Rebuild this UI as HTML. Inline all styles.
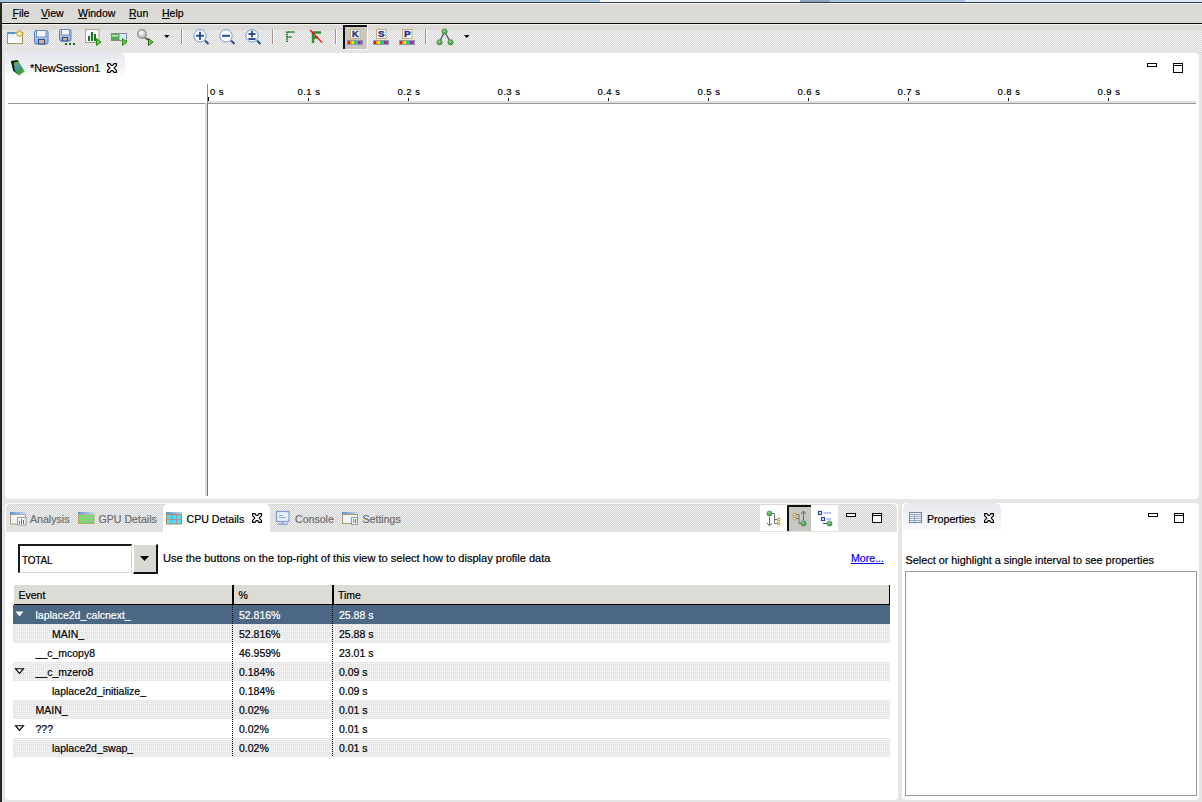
<!DOCTYPE html>
<html><head><meta charset="utf-8">
<style>
*{box-sizing:border-box;margin:0;padding:0}
html,body{width:1202px;height:802px;overflow:hidden}
body{position:relative;background:#e5e5e3;font-family:"Liberation Sans",sans-serif;font-size:11px;color:#000}
.a{position:absolute}
.t{position:absolute;white-space:pre;line-height:1;-webkit-text-stroke:0.2px currentColor}
svg{position:absolute;overflow:visible}
</style></head><body>
<!-- top strip -->
<div class="a" style="left:0;top:0;width:1202px;height:2px;background:#a9c6e3"></div>
<div class="a" style="left:600px;top:0;width:200px;height:2px;background:#f4f6f8"></div>
<div class="a" style="left:800px;top:0;width:30px;height:2px;background:#8fa5c0"></div>
<div class="a" style="left:965px;top:0;width:237px;height:2px;background:#dfe9f4"></div>
<div class="a" style="left:0;top:2px;width:1202px;height:1px;background:#2c3d52"></div>
<div class="a" style="left:0;top:3px;width:2px;height:799px;background:#262626"></div>
<!-- menu bar -->
<div class="a" style="left:2px;top:3px;width:1200px;height:20px;background:#dcdad5;border-top:1px solid #f6f6f4"></div>
<div class="a" style="left:2px;top:23px;width:1200px;height:1px;background:#0a0a0a"></div>
<div class="t" style="left:12.5px;top:8px;font-size:10.5px">File</div>
<div class="a" style="left:12px;top:18px;width:5px;height:1px;background:#000"></div>
<div class="t" style="left:41px;top:8px;font-size:10.5px">View</div>
<div class="a" style="left:41px;top:18px;width:7px;height:1px;background:#000"></div>
<div class="t" style="left:78px;top:8px;font-size:10.5px">Window</div>
<div class="a" style="left:78px;top:18px;width:9px;height:1px;background:#000"></div>
<div class="t" style="left:129px;top:8px;font-size:10.5px">Run</div>
<div class="a" style="left:129px;top:18px;width:7px;height:1px;background:#000"></div>
<div class="t" style="left:162px;top:8px;font-size:10.5px">Help</div>
<div class="a" style="left:162px;top:18px;width:8px;height:1px;background:#000"></div>
<!-- toolbar -->
<div class="a" style="left:2px;top:24px;width:1200px;height:29px;background:linear-gradient(#f4f4f2 0 1px,#dcdad6 1px 6px,transparent 6px),repeating-conic-gradient(#dbd9d5 0 25%,#eef0f2 0 50%) 0 0/2px 2px"></div>

<svg style="left:0;top:0" width="480" height="52" viewBox="0 0 480 52">
<defs>
<linearGradient id="gwin" x1="0" y1="0" x2="0" y2="1"><stop offset="0" stop-color="#e4eef8"/><stop offset="1" stop-color="#ffffff"/></linearGradient>
<linearGradient id="gflop" x1="0" y1="0" x2="0" y2="1"><stop offset="0" stop-color="#dfe8f4"/><stop offset="1" stop-color="#8aa6d2"/></linearGradient>
<radialGradient id="gmag" cx="0.4" cy="0.35" r="0.6"><stop offset="0" stop-color="#ffffff"/><stop offset="1" stop-color="#b8b8b8"/></radialGradient>
<radialGradient id="gnode" cx="0.4" cy="0.35" r="0.7"><stop offset="0" stop-color="#9ad08a"/><stop offset="1" stop-color="#3f8f3f"/></radialGradient>
</defs>
<!-- new session -->
<rect x="7.5" y="32.5" width="15" height="11" fill="url(#gwin)" stroke="#a58f5f"/>
<rect x="7" y="32" width="8" height="2" fill="#5f8fcc"/>
<path d="M19.5 30L23 33.5L19.5 37L16 33.5Z" fill="#f2dc7a" stroke="#b88f12" stroke-width="1"/>
<path d="M19.5 31.5V35.5M17.5 33.5H21.5" stroke="#fff8d0" stroke-width="1"/>
<!-- save -->
<rect x="34.5" y="30.5" width="13.5" height="13.5" rx="1.5" fill="url(#gflop)" stroke="#5b7fbe"/>
<rect x="36.5" y="30.5" width="9.5" height="6.5" fill="#f2f6fb" stroke="#6a8cc6" stroke-width="1"/>
<rect x="38.5" y="39.5" width="6" height="4.5" fill="#c8b488" stroke="#2c4a90"/>
<!-- save all -->
<rect x="59.5" y="29.5" width="11.5" height="11.5" rx="1.5" fill="url(#gflop)" stroke="#5b7fbe"/>
<rect x="61.5" y="29.5" width="8" height="5.5" fill="#f2f6fb" stroke="#6a8cc6"/>
<rect x="62.5" y="37.5" width="5" height="3.5" fill="#c8b488" stroke="#2c4a90"/>
<rect x="65" y="43" width="2" height="2" fill="#127012"/><rect x="69" y="43" width="2" height="2" fill="#127012"/><rect x="73" y="43" width="2" height="2" fill="#127012"/>
<!-- chart -->
<rect x="85.5" y="29.5" width="13.5" height="13" fill="#f6f8fb" stroke="#bba878"/>
<path d="M85.5 42.5H99" stroke="#9a9a8a"/>
<rect x="88" y="36" width="2" height="5" fill="#1b761b"/><rect x="91" y="32" width="2" height="9" fill="#1b761b"/><rect x="94" y="34" width="2" height="7" fill="#1b761b"/>
<path d="M96.5 38.5L101 42L96.5 45.5Z" fill="#5cd23a" stroke="#2f8a16"/>
<!-- icon5 -->
<rect x="111.5" y="33.5" width="15" height="7" fill="#d8ecf8" stroke="#8a8aa0"/>
<rect x="111.5" y="33.5" width="7.5" height="7" fill="#4fae4f" stroke="#8a8a70"/>
<rect x="112" y="35" width="6" height="1.5" fill="#c6ecc6"/>
<path d="M122.5 38.5L127 42L122.5 45.5Z" fill="#5cd23a" stroke="#2f8a16"/>
<!-- magnifier -->
<circle cx="142" cy="34" r="4.3" fill="url(#gmag)" stroke="#8c8c8c" stroke-width="1.2"/>
<path d="M145 37.5L148 40" stroke="#444" stroke-width="1.6"/>
<path d="M148.5 38.5L153 42L148.5 45.5Z" fill="#5cd23a" stroke="#2a6a12"/>
<path d="M164 35H169.5L166.75 38Z" fill="#000"/>
<!-- separator -->
<rect x="181" y="29" width="1" height="15" fill="#9a9893"/><rect x="182" y="29" width="1" height="15" fill="#fff"/>
<!-- zoom in/out/fit -->
<g stroke="#6f9bd2" stroke-width="1" fill="#fbfdff">
<circle cx="200" cy="35.8" r="6.2"/><circle cx="226" cy="35.8" r="6.2"/><circle cx="252" cy="35.8" r="6.2"/></g>
<g stroke="#2d4f94" stroke-width="2" fill="none" stroke-linecap="butt">
<path d="M205 40.5L208.5 44"/><path d="M231 40.5L234.5 44"/><path d="M257 40.5L260.5 44"/>
<path d="M196 35.8H204M200 31.8V39.8"/>
<path d="M222 35.8H230"/>
<path d="M248.5 34H255.5M252 30.8V37.2M248.5 39H255.5"/>
</g>
<rect x="272" y="29" width="1" height="15" fill="#9a9893"/><rect x="273" y="29" width="1" height="15" fill="#fff"/>
<!-- F icons -->
<path d="M287 42V32H295M287 37H292" stroke="#2f8a2f" stroke-width="2" stroke-dasharray="1.5 0.7" fill="none"/>
<path d="M313 43V32.5H321M313 37.5H318" stroke="#2a922a" stroke-width="2.4" fill="none"/>
<path d="M310 30L322 42.5" stroke="#f01010" stroke-width="1.3"/>
<rect x="335" y="29" width="1" height="15" fill="#9a9893"/><rect x="336" y="29" width="1" height="15" fill="#fff"/>
<!-- K S P -->
<rect x="343" y="25" width="24" height="24" fill="#c9c7c2"/>
<rect x="343" y="25" width="24" height="2" fill="#111"/><rect x="343" y="25" width="2" height="24" fill="#111"/>
<rect x="367" y="25" width="1" height="25" fill="#fafafa"/><rect x="343" y="49" width="25" height="1" fill="#fafafa"/>
<g fill="#fcfcfc" stroke="#c2ab78"><rect x="350.5" y="29.5" width="9.5" height="9"/><rect x="376.5" y="29.5" width="9.5" height="9"/><rect x="402.5" y="29.5" width="9.5" height="9"/></g>
<g fill="#1c3d8a" stroke="#1c3d8a" stroke-width="0.5" font-family="Liberation Sans" font-weight="bold" font-size="9">
<text x="352" y="37" textLength="6.6" lengthAdjust="spacingAndGlyphs">K</text><text x="378" y="37" textLength="6.6" lengthAdjust="spacingAndGlyphs">S</text><text x="404" y="37" textLength="6.6" lengthAdjust="spacingAndGlyphs">P</text></g>
<rect x="347.5" y="40.5" width="15" height="4" fill="#8a9ab8" stroke="#8f9aae"/>
<rect x="348" y="41" width="2" height="3" fill="#e81818"/>
<rect x="350" y="41" width="2" height="3" fill="#f89a10"/>
<rect x="352" y="41" width="2" height="3" fill="#f6f01a"/>
<rect x="354" y="41" width="2" height="3" fill="#3cc83c"/>
<rect x="356" y="41" width="2" height="3" fill="#18c0e0"/>
<rect x="358" y="41" width="2" height="3" fill="#d0187a"/>
<rect x="360" y="41" width="2" height="3" fill="#8a4ab8"/>
<rect x="373.5" y="40.5" width="15" height="4" fill="#8a9ab8" stroke="#8f9aae"/>
<rect x="374" y="41" width="2" height="3" fill="#e81818"/>
<rect x="376" y="41" width="2" height="3" fill="#f89a10"/>
<rect x="378" y="41" width="2" height="3" fill="#f6f01a"/>
<rect x="380" y="41" width="2" height="3" fill="#3cc83c"/>
<rect x="382" y="41" width="2" height="3" fill="#18c0e0"/>
<rect x="384" y="41" width="2" height="3" fill="#d0187a"/>
<rect x="386" y="41" width="2" height="3" fill="#8a4ab8"/>
<rect x="399.5" y="40.5" width="15" height="4" fill="#8a9ab8" stroke="#8f9aae"/>
<rect x="400" y="41" width="2" height="3" fill="#e81818"/>
<rect x="402" y="41" width="2" height="3" fill="#f89a10"/>
<rect x="404" y="41" width="2" height="3" fill="#f6f01a"/>
<rect x="406" y="41" width="2" height="3" fill="#3cc83c"/>
<rect x="408" y="41" width="2" height="3" fill="#18c0e0"/>
<rect x="410" y="41" width="2" height="3" fill="#d0187a"/>
<rect x="412" y="41" width="2" height="3" fill="#8a4ab8"/>
<rect x="425" y="29" width="1" height="15" fill="#9a9893"/><rect x="426" y="29" width="1" height="15" fill="#fff"/>
<path d="M444.5 31.5L439.5 42.3M444.5 31.5L450.5 42.3" stroke="#3e4e5e" stroke-width="1.2"/>
<circle cx="444.5" cy="31.5" r="2.6" fill="url(#gnode)" stroke="#3a8a3a" stroke-width="0.8"/>
<circle cx="439.5" cy="42.3" r="2.6" fill="url(#gnode)" stroke="#3a8a3a" stroke-width="0.8"/>
<circle cx="450.5" cy="42.3" r="2.6" fill="url(#gnode)" stroke="#3a8a3a" stroke-width="0.8"/>
<path d="M464 35H469.5L466.75 38Z" fill="#000"/>
</svg>
<!-- session panel -->
<div class="a" style="left:5px;top:53px;width:1194px;height:446px;background:#fff;border-radius:4px"></div>
<div class="a" style="left:5px;top:53px;width:120px;height:24px;background:linear-gradient(#e4e7ed,#f4f5f7 70%,#fff);border-radius:6px 6px 0 0"></div>
<div class="t" style="left:30px;top:63px;font-size:10.8px">*NewSession1</div>
<!-- min / max -->
<!-- ruler -->
<div class="a" style="left:8px;top:103px;width:198px;height:1px;background:#9c9891"></div>
<div class="a" style="left:208px;top:101px;width:988px;height:2px;background:#e2e1dd"></div>
<div class="a" style="left:208px;top:103px;width:988px;height:1px;background:#9c9891"></div>
<div class="a" style="left:207px;top:84px;width:1px;height:19px;background:#8f8c86"></div>
<div class="a" style="left:205px;top:103px;width:2px;height:393px;background:#dcdbd7"></div>
<div class="a" style="left:207px;top:103px;width:1px;height:393px;background:#77756f"></div>
<div class="a" style="left:208px;top:97px;width:1px;height:4px;background:#000"></div>
<div class="t" style="left:210px;top:86.5px;font-size:9.5px;letter-spacing:0.45px">0 s</div>
<div class="a" style="left:308px;top:98px;width:1px;height:3px;background:#000"></div>
<div class="t" style="left:297.5px;top:86.5px;font-size:9.5px;letter-spacing:0.45px">0.1 s</div>
<div class="a" style="left:408px;top:98px;width:1px;height:3px;background:#000"></div>
<div class="t" style="left:397.5px;top:86.5px;font-size:9.5px;letter-spacing:0.45px">0.2 s</div>
<div class="a" style="left:508px;top:98px;width:1px;height:3px;background:#000"></div>
<div class="t" style="left:497.5px;top:86.5px;font-size:9.5px;letter-spacing:0.45px">0.3 s</div>
<div class="a" style="left:608px;top:98px;width:1px;height:3px;background:#000"></div>
<div class="t" style="left:597.5px;top:86.5px;font-size:9.5px;letter-spacing:0.45px">0.4 s</div>
<div class="a" style="left:708px;top:98px;width:1px;height:3px;background:#000"></div>
<div class="t" style="left:697.5px;top:86.5px;font-size:9.5px;letter-spacing:0.45px">0.5 s</div>
<div class="a" style="left:808px;top:98px;width:1px;height:3px;background:#000"></div>
<div class="t" style="left:797.5px;top:86.5px;font-size:9.5px;letter-spacing:0.45px">0.6 s</div>
<div class="a" style="left:908px;top:98px;width:1px;height:3px;background:#000"></div>
<div class="t" style="left:897.5px;top:86.5px;font-size:9.5px;letter-spacing:0.45px">0.7 s</div>
<div class="a" style="left:1008px;top:98px;width:1px;height:3px;background:#000"></div>
<div class="t" style="left:997.5px;top:86.5px;font-size:9.5px;letter-spacing:0.45px">0.8 s</div>
<div class="a" style="left:1108px;top:98px;width:1px;height:3px;background:#000"></div>
<div class="t" style="left:1097.5px;top:86.5px;font-size:9.5px;letter-spacing:0.45px">0.9 s</div>

<!-- bottom left panel -->
<div class="a" style="left:5px;top:503px;width:893px;height:297px;background:#fff;border-radius:4px"></div>
<div class="a" style="left:6px;top:503px;width:891px;height:29px;background:linear-gradient(#dcdad6 0 1px,transparent 1px),repeating-conic-gradient(#d9d7d2 0 25%,#e9edf1 0 50%) 0 0/2px 2px;border-radius:5px 5px 0 0;border-top:1px solid #f8f8f6"></div>
<div class="a" style="left:163px;top:504px;width:107px;height:28px;background:#fff;border-radius:5px 5px 0 0"></div>
<div class="t" style="left:30px;top:513.5px;font-size:10.6px;color:#6e6e6e">Analysis</div>
<div class="t" style="left:98.5px;top:513.5px;font-size:10.6px;color:#6e6e6e">GPU Details</div>
<div class="t" style="left:186.5px;top:513.5px;font-size:10.6px">CPU Details</div>
<div class="t" style="left:295px;top:513.5px;font-size:10.6px;color:#6e6e6e">Console</div>
<div class="t" style="left:362.5px;top:513.5px;font-size:10.6px;color:#6e6e6e">Settings</div>
<!-- view toolbar -->
<div class="a" style="left:760px;top:505px;width:78px;height:26px;background:#fff"></div>
<div class="a" style="left:787px;top:505px;width:24px;height:26px;background:#c9c7c2;border-top:2px solid #111;border-left:2px solid #111"></div>
<!-- combo -->
<div class="a" style="left:18px;top:544px;width:114px;height:29px;background:#fff;border-top:2px solid #1a1a1a;border-left:2px solid #1a1a1a;border-bottom:1px solid #d8d6d2;border-right:1px solid #d8d6d2"></div>
<div class="t" style="left:22px;top:555.5px;font-size:10px;letter-spacing:-0.2px">TOTAL</div>
<div class="a" style="left:133px;top:544px;width:25px;height:30px;background:#dad8d3;border-right:2px solid #111;border-bottom:2px solid #111;border-top:1px solid #fff;border-left:1px solid #fff"></div>
<svg style="left:140px;top:556px" width="9" height="5"><path d="M0 0H9L4.5 5Z" fill="#000"/></svg>
<div class="t" style="left:163px;top:553px;font-size:11.05px">Use the buttons on the top-right of this view to select how to display profile data</div>
<div class="t" style="left:851px;top:553px;font-size:10.6px;color:#0000ee;text-decoration:underline">More...</div>
<!-- table -->
<div class="a" style="left:14px;top:585px;width:876px;height:19px;background:#dddbd6;border-right:1px solid #000"></div>
<div class="a" style="left:14px;top:604px;width:876px;height:1px;background:#000"></div>
<div class="a" style="left:232px;top:585px;width:2px;height:19px;background:#000"></div>
<div class="a" style="left:332px;top:585px;width:2px;height:19px;background:#000"></div>
<div class="t" style="left:18.5px;top:590px;font-size:10.5px">Event</div>
<div class="t" style="left:238.5px;top:590px;font-size:10.5px">%</div>
<div class="t" style="left:338px;top:590px;font-size:10.5px">Time</div>

<div class="a" style="left:13px;top:605px;width:877px;height:19px;background:#4b6783"></div>
<svg style="left:15px;top:611px" width="9" height="6"><path d="M0.5 0.5H8.5L4.5 5.5Z" fill="#fff"/></svg>
<div class="t" style="left:35.5px;top:609.5px;font-size:10.5px;color:#fff">laplace2d_calcnext_</div>
<div class="t" style="left:239px;top:609.5px;font-size:10.5px;color:#fff">52.816%</div>
<div class="t" style="left:339px;top:609.5px;font-size:10.5px;color:#fff">25.88 s</div>
<div class="a" style="left:13px;top:624px;width:877px;height:19px;background:conic-gradient(#fbfbfb 0 25%,#e7e7e7 0) 0 1px/2px 2px"></div>
<div class="t" style="left:52px;top:628.5px;font-size:10.5px;color:#000">MAIN_</div>
<div class="t" style="left:239px;top:628.5px;font-size:10.5px;color:#000">52.816%</div>
<div class="t" style="left:339px;top:628.5px;font-size:10.5px;color:#000">25.88 s</div>
<div class="a" style="left:13px;top:643px;width:877px;height:19px;background:#fff"></div>
<div class="t" style="left:35.5px;top:647.5px;font-size:10.5px;color:#000">__c_mcopy8</div>
<div class="t" style="left:239px;top:647.5px;font-size:10.5px;color:#000">46.959%</div>
<div class="t" style="left:339px;top:647.5px;font-size:10.5px;color:#000">23.01 s</div>
<div class="a" style="left:13px;top:662px;width:877px;height:19px;background:conic-gradient(#fbfbfb 0 25%,#e7e7e7 0) 0 1px/2px 2px"></div>
<svg style="left:14px;top:668px" width="11" height="7"><path d="M1.5 0.7H9.5L5.5 5.3Z" fill="#fff" stroke="#000" stroke-width="1.1" stroke-linejoin="miter"/></svg>
<div class="t" style="left:35.5px;top:666.5px;font-size:10.5px;color:#000">__c_mzero8</div>
<div class="t" style="left:239px;top:666.5px;font-size:10.5px;color:#000">0.184%</div>
<div class="t" style="left:339px;top:666.5px;font-size:10.5px;color:#000">0.09 s</div>
<div class="a" style="left:13px;top:681px;width:877px;height:19px;background:#fff"></div>
<div class="t" style="left:52px;top:685.5px;font-size:10.5px;color:#000">laplace2d_initialize_</div>
<div class="t" style="left:239px;top:685.5px;font-size:10.5px;color:#000">0.184%</div>
<div class="t" style="left:339px;top:685.5px;font-size:10.5px;color:#000">0.09 s</div>
<div class="a" style="left:13px;top:700px;width:877px;height:19px;background:conic-gradient(#fbfbfb 0 25%,#e7e7e7 0) 0 1px/2px 2px"></div>
<div class="t" style="left:35.5px;top:704.5px;font-size:10.5px;color:#000">MAIN_</div>
<div class="t" style="left:239px;top:704.5px;font-size:10.5px;color:#000">0.02%</div>
<div class="t" style="left:339px;top:704.5px;font-size:10.5px;color:#000">0.01 s</div>
<div class="a" style="left:13px;top:719px;width:877px;height:19px;background:#fff"></div>
<svg style="left:14px;top:725px" width="11" height="7"><path d="M1.5 0.7H9.5L5.5 5.3Z" fill="#fff" stroke="#000" stroke-width="1.1" stroke-linejoin="miter"/></svg>
<div class="t" style="left:35.5px;top:723.5px;font-size:10.5px;color:#000">???</div>
<div class="t" style="left:239px;top:723.5px;font-size:10.5px;color:#000">0.02%</div>
<div class="t" style="left:339px;top:723.5px;font-size:10.5px;color:#000">0.01 s</div>
<div class="a" style="left:13px;top:738px;width:877px;height:19px;background:conic-gradient(#fbfbfb 0 25%,#e7e7e7 0) 0 1px/2px 2px"></div>
<div class="t" style="left:52px;top:742.5px;font-size:10.5px;color:#000">laplace2d_swap_</div>
<div class="t" style="left:239px;top:742.5px;font-size:10.5px;color:#000">0.02%</div>
<div class="t" style="left:339px;top:742.5px;font-size:10.5px;color:#000">0.01 s</div>
<div class="a" style="left:232px;top:605px;width:1px;height:152px;background:repeating-linear-gradient(#000 0 1px,transparent 1px 2px)"></div>
<div class="a" style="left:332px;top:605px;width:1px;height:152px;background:repeating-linear-gradient(#000 0 1px,transparent 1px 2px)"></div>
<!-- bottom right panel -->
<div class="a" style="left:902px;top:503px;width:297px;height:297px;background:#fff;border-radius:4px"></div>

<div class="a" style="left:903px;top:503px;width:98px;height:28px;background:linear-gradient(#e6e8ee,#fafafb);border-radius:6px 6px 0 0"></div>
<div class="t" style="left:927px;top:513.5px;font-size:10.6px">Properties</div>
<div class="t" style="left:905.5px;top:555px;font-size:10.85px">Select or highlight a single interval to see properties</div>
<div class="a" style="left:905px;top:571px;width:292px;height:225px;border:1px solid #9c9891"></div>
<svg style="left:0;top:0" width="1202" height="802" viewBox="0 0 1202 802">
<defs>
<linearGradient id="gsess" x1="0" y1="0" x2="0.6" y2="1"><stop offset="0" stop-color="#2a6a3a"/><stop offset="0.3" stop-color="#6aa848"/><stop offset="0.55" stop-color="#4a9ab0"/><stop offset="0.8" stop-color="#3c9a3c"/><stop offset="1" stop-color="#5ab040"/></linearGradient>
<linearGradient id="gtitle" x1="0" y1="0" x2="1" y2="0"><stop offset="0" stop-color="#5f8fcc"/><stop offset="1" stop-color="#c8daee"/></linearGradient>
</defs>
<!-- session icon -->
<path d="M11 61L18 60.2L24.6 71.6L19.5 75.5L13.2 70.7Z" fill="url(#gsess)"/>
<path d="M11 61L18 60.2L18.5 61.5L13.5 62.5L15 71L19.5 75.5L13.2 70.7Z" fill="#0b1a18"/>

<!-- analysis icon -->
<rect x="10.5" y="514.5" width="15" height="9.5" fill="#eef4fa" stroke="#b09a68"/>
<rect x="10" y="512" width="16" height="2.5" fill="url(#gtitle)"/>
<rect x="17.5" y="517.5" width="8.5" height="7.5" fill="#f4f6f8" stroke="#9c9c9c"/>
<rect x="19" y="521" width="1" height="3" fill="#3a9a3a"/><rect x="21" y="519" width="1" height="5" fill="#3a9a3a"/><rect x="23" y="520" width="1" height="4" fill="#3a9a3a"/>
<!-- gpu icon -->
<rect x="78" y="512" width="16" height="2.5" fill="url(#gtitle)"/>
<rect x="78.5" y="515" width="15.5" height="8.5" fill="#b8b8a8" stroke="#c0a070"/>
<g fill="#62e852">
<rect x="79" y="515" width="2.2" height="2.2"/><rect x="82" y="515" width="2.2" height="2.2"/><rect x="85" y="515" width="2.2" height="2.2"/><rect x="88" y="515" width="2.2" height="2.2"/><rect x="91" y="515" width="2.2" height="2.2"/>
<rect x="79" y="518" width="2.2" height="2.2"/><rect x="82" y="518" width="2.2" height="2.2"/><rect x="85" y="518" width="2.2" height="2.2"/><rect x="88" y="518" width="2.2" height="2.2"/><rect x="91" y="518" width="2.2" height="2.2"/>
<rect x="79" y="521" width="2.2" height="2.2"/><rect x="82" y="521" width="2.2" height="2.2"/><rect x="85" y="521" width="2.2" height="2.2"/><rect x="88" y="521" width="2.2" height="2.2"/><rect x="91" y="521" width="2.2" height="2.2"/>
</g>
<!-- cpu icon -->
<rect x="166" y="512" width="16" height="2.5" fill="url(#gtitle)"/>
<rect x="166.5" y="514.5" width="15" height="9.5" fill="#9a9a9a" stroke="#b08a50"/>
<g fill="#58d8f4"><rect x="167" y="515" width="4" height="4"/><rect x="172" y="515" width="4" height="4"/><rect x="177" y="515" width="4" height="4"/>
<rect x="167" y="520" width="4" height="3.5"/><rect x="172" y="520" width="4" height="3.5"/><rect x="177" y="520" width="4" height="3.5"/></g>

<!-- console icon -->
<rect x="276.5" y="511.5" width="12.5" height="10" fill="#e8eef8" stroke="#7f9fd0" stroke-width="1.2"/>
<path d="M279 515.5H283M279 517.5H286" stroke="#7f9fd0" stroke-width="0.9"/>
<path d="M282.5 522V523.5M277.5 524.2H288" stroke="#7f9fd0" stroke-width="1.2"/>
<!-- settings icon -->
<rect x="342" y="512" width="16" height="2.5" fill="url(#gtitle)"/>
<rect x="342.5" y="514.5" width="15" height="9" fill="#eef4fa" stroke="#b09a68"/>
<rect x="351.5" y="517.5" width="6" height="7" fill="#f4f6f8" stroke="#9c9c9c"/>
<rect x="353" y="519" width="1.2" height="4" fill="#5a9ad0"/><rect x="355" y="519" width="1.2" height="4" fill="#4aa84a"/>
<!-- properties icon -->
<rect x="909.5" y="512.5" width="12" height="10" fill="#f0f4f8" stroke="#6f89ab"/>
<path d="M910 514.5H921M910 516.5H921M910 518.5H921M910 520.5H921M914.5 515V522" stroke="#8aa0bc" stroke-width="0.9"/>

</svg>
<svg style="left:0;top:0" width="1202" height="802" viewBox="0 0 1202 802">
<defs><radialGradient id="gn2" cx="0.4" cy="0.35" r="0.7"><stop offset="0" stop-color="#8fd08a"/><stop offset="1" stop-color="#2f8a3f"/></radialGradient></defs>
<!-- icon 1 -->
<path d="M771.5 513.5H774.5V523.5H777M774.5 519.5H777" stroke="#607080" stroke-width="1" fill="none"/>
<circle cx="769.5" cy="513.5" r="2.6" fill="url(#gn2)" stroke="#2f8a3f" stroke-width="0.6"/>
<path d="M769.5 517V525" stroke="#5a6a80" stroke-width="1"/>
<path d="M767 523L769.5 526L772 523" stroke="#5a6a80" stroke-width="1" fill="none"/>
<rect x="777.4" y="518.4" width="2.4" height="2.4" fill="#fff" stroke="#d0a020" stroke-width="1"/>
<rect x="777.4" y="522.4" width="2.4" height="2.4" fill="#fff" stroke="#d0a020" stroke-width="1"/>
<!-- icon 2 -->
<path d="M796 514.5H799V523.5H802M796 518.5H799" stroke="#607080" stroke-width="1" fill="none"/>
<rect x="793.4" y="513.4" width="2.4" height="2.4" fill="#fff" stroke="#d0a020" stroke-width="1"/>
<rect x="793.4" y="517.4" width="2.4" height="2.4" fill="#fff" stroke="#d0a020" stroke-width="1"/>
<circle cx="803.5" cy="523.3" r="2.6" fill="url(#gn2)" stroke="#2f8a3f" stroke-width="0.6"/>
<path d="M803.5 520V511.5" stroke="#5a6a80" stroke-width="1"/>
<path d="M801 514L803.5 511L806 514" stroke="#5a6a80" stroke-width="1" fill="none"/>
<!-- icon 3 -->
<rect x="818.5" y="511.5" width="3" height="3" fill="#fff" stroke="#2a4aa0" stroke-width="1.2"/>
<rect x="821.5" y="517.5" width="3" height="3" fill="#fff" stroke="#2a4aa0" stroke-width="1.2"/>
<path d="M823.5 513H831M826.5 519H831" stroke="#4a6ad0" stroke-width="1" stroke-dasharray="1.2 0.4"/>
<path d="M823 523.5H828" stroke="#444" stroke-width="1"/>
<circle cx="829.5" cy="523.5" r="2.6" fill="url(#gn2)" stroke="#2f8a3f" stroke-width="0.6"/>
</svg>
<svg style="left:0;top:0" width="1202" height="802">
<rect x="1147.5" y="63.5" width="9" height="3" fill="#fff" stroke="#000"/><rect x="1173.5" y="63.5" width="9" height="9" fill="#fff" stroke="#000"/><path d="M1174 65.5H1182" stroke="#000"/>
<rect x="846.5" y="513.5" width="9" height="3" fill="#fff" stroke="#000"/><rect x="872.5" y="513.5" width="9" height="9" fill="#fff" stroke="#000"/><path d="M873 515.5H881" stroke="#000"/>
<rect x="1148.5" y="513.5" width="9" height="3" fill="#fff" stroke="#000"/><rect x="1174.5" y="513.5" width="9" height="9" fill="#fff" stroke="#000"/><path d="M1175 515.5H1183" stroke="#000"/>
<path d="M107.60 63.60 L109.98 63.60 L111.30 65.54 L112.70 65.54 L114.02 63.60 L116.40 63.60 L116.40 65.80 L114.29 67.82 L114.29 68.35 L116.40 70.46 L116.40 72.40 L114.02 72.40 L112.70 70.55 L111.30 70.55 L109.98 72.40 L107.60 72.40 L107.60 70.46 L109.71 68.35 L109.71 67.82 L107.60 65.80Z" fill="#fff" stroke="#000" stroke-width="1.15" stroke-linejoin="miter"/>
<path d="M252.60 513.60 L254.98 513.60 L256.30 515.54 L257.70 515.54 L259.02 513.60 L261.40 513.60 L261.40 515.80 L259.29 517.82 L259.29 518.35 L261.40 520.46 L261.40 522.40 L259.02 522.40 L257.70 520.55 L256.30 520.55 L254.98 522.40 L252.60 522.40 L252.60 520.46 L254.71 518.35 L254.71 517.82 L252.60 515.80Z" fill="#fff" stroke="#000" stroke-width="1.15" stroke-linejoin="miter"/>
<path d="M984.60 513.60 L986.98 513.60 L988.30 515.54 L989.70 515.54 L991.02 513.60 L993.40 513.60 L993.40 515.80 L991.29 517.82 L991.29 518.35 L993.40 520.46 L993.40 522.40 L991.02 522.40 L989.70 520.55 L988.30 520.55 L986.98 522.40 L984.60 522.40 L984.60 520.46 L986.71 518.35 L986.71 517.82 L984.60 515.80Z" fill="#fff" stroke="#000" stroke-width="1.15" stroke-linejoin="miter"/>
</svg>
</body></html>
